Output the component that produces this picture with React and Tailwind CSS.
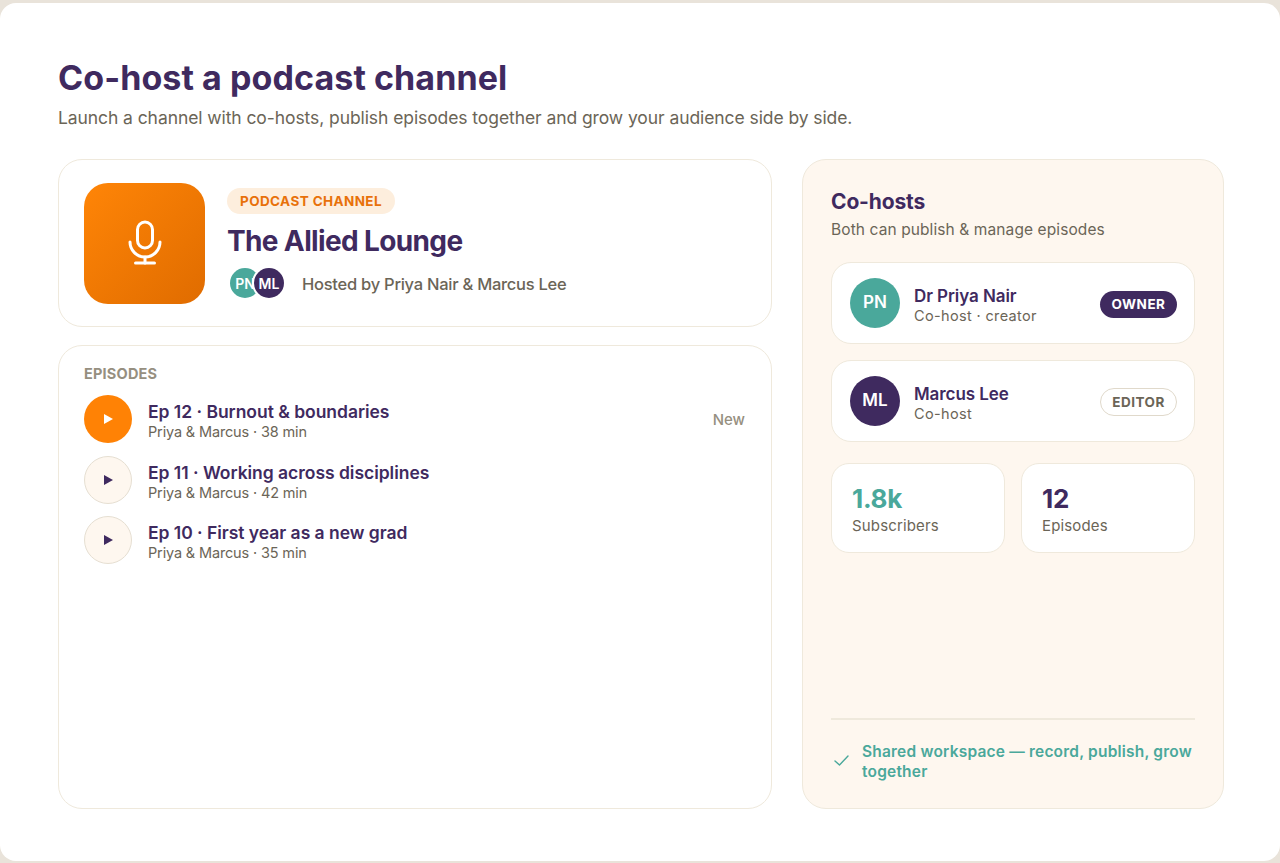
import React from "react";

function Play({ color, size = 12 }) {
  return (
    <svg width={size} height={size} viewBox="0 0 12 12"><path d="M2 1 L11 6 L2 11 Z" fill={color} /></svg>
  );
}

function Episode({ title, meta, active, right }) {
  return (
    <div className="flex items-center h-[48px]">
      <div className={active ? "w-[48px] h-[48px] rounded-full bg-[#ff8205] flex items-center justify-center shrink-0" : "w-[48px] h-[48px] rounded-full bg-[#fef7ef] border border-[#e6dfd2] flex items-center justify-center shrink-0"}>
        <Play color={active ? "#ffffff" : "#3f2a5f"} />
      </div>
      <div className="ml-4 flex-1 pt-[4px]">
        <div className="text-[17.5px] leading-[22px] font-semibold text-[#3f2a5f] tracking-[-0.03px]">{title}</div>
        <div className="text-[14.5px] leading-[18px] text-[#6b6557] tracking-[-0.15px]">{meta}</div>
      </div>
      {right && <div className="text-[15px] font-medium text-[#968f80] pt-[2px] pr-px">{right}</div>}
    </div>
  );
}

function Host({ initials, bg, name, role, badge, dark }) {
  return (
    <div className="h-[82px] bg-white border border-[#efe9dc] rounded-[20px] flex items-center pl-[18px] pr-[17px]">
      <div className={"w-[50px] h-[50px] rounded-full flex items-center justify-center text-white text-[17px] font-semibold shrink-0 " + bg}>{initials}</div>
      <div className="ml-[14px] flex-1 pt-[4px]">
        <div className="text-[17px] leading-[20px] font-semibold text-[#3f2a5f] tracking-[-0.07px]">{name}</div>
        <div className="text-[14.5px] leading-[19px] text-[#6b6557] tracking-[0.35px]">{role}</div>
      </div>
      <div className={dark ? "mt-[2px] h-[27px] w-[77px] rounded-full bg-[#3f2a5f] text-white text-[13.5px] tracking-[0.5px] font-bold flex items-center justify-center" : "mt-[2px] h-[28px] w-[77px] rounded-full bg-white border border-[#e0d9cb] text-[#6b6557] text-[13.5px] tracking-[0.5px] font-bold flex items-center justify-center"}>{badge}</div>
    </div>
  );
}

function Stat({ value, label, color }) {
  return (
    <div className="flex-1 h-[90px] bg-white border border-[#efe9dc] rounded-[18px] pl-[20px] pt-[20px]">
      <div className={"text-[26px] leading-[30px] font-bold tracking-[-0.3px] " + color}>{value}</div>
      <div className="text-[15px] leading-[22px] text-[#6b6557] mt-[1px] tracking-[0.15px]">{label}</div>
    </div>
  );
}

export default function App() {
  return (
    <div className="h-[863px] w-[1280px] bg-[#e9e3da] pt-[3px] pb-[2px] font-['Inter',sans-serif] overflow-hidden">
      <div className="h-full bg-white rounded-[16px] pl-[58px] pr-[56px] pt-[54px] flex flex-col">
        <h1 className="text-[34px] leading-[42px] font-bold text-[#3f2a5f] tracking-[0.08px]">Co-host a podcast channel</h1>
        <p className="text-[17.5px] leading-[24px] text-[#6b6557] mt-[7px] tracking-[-0.08px]">Launch a channel with co-hosts, publish episodes together and grow your audience side by side.</p>
        <div className="flex gap-[30px] mt-[29px] h-[650px]">
          <div className="w-[714px] flex flex-col gap-[18px]">
            <div className="h-[168px] border border-[#efe9dc] rounded-[24px] flex items-center pl-[25px]">
              <div className="w-[121px] h-[121px] rounded-[24px] bg-gradient-to-br from-[#ff8507] to-[#e06c00] flex items-center justify-center shrink-0">
                <svg width="40" height="46" viewBox="0 0 40 46" fill="none" stroke="#fff" strokeWidth="3" strokeLinecap="round" strokeLinejoin="round">
                  <rect x="12.5" y="2" width="15" height="26" rx="7.5" />
                  <path d="M5 22 a15 15 0 0 0 30 0" />
                  <path d="M20 37 v6" />
                  <path d="M10.5 43 h19" />
                </svg>
              </div>
              <div className="ml-[22px]">
                <div className="inline-flex items-center h-[26px] px-[13px] rounded-full bg-[#fdeedd] text-[#e8710a] text-[13.5px] font-bold tracking-[0.4px]">PODCAST CHANNEL</div>
                <div className="text-[28px] leading-[36px] font-bold text-[#3f2a5f] mt-[9px] tracking-[-0.64px]">The Allied Lounge</div>
                <div className="flex items-center mt-[9px]">
                  <div className="flex pl-[3px]">
                    <div className="w-[30px] h-[30px] rounded-full bg-[#4aa89b] text-white text-[14px] font-semibold flex items-center justify-center">PN</div>
                    <div className="w-[30px] h-[30px] rounded-full bg-[#3f2a5f] ring-2 ring-white text-white text-[14px] font-semibold flex items-center justify-center -ml-[6px]">ML</div>
                  </div>
                  <div className="ml-[18px] pt-[2px] text-[16.5px] font-medium text-[#6b6557] tracking-[-0.26px]">Hosted by Priya Nair &amp; Marcus Lee</div>
                </div>
              </div>
            </div>
            <div className="flex-1 border border-[#efe9dc] rounded-[24px] pl-[25px] pr-[25px] pt-[18px]">
              <div className="text-[14.5px] leading-[20px] font-bold text-[#968f80] tracking-[0.2px]">EPISODES</div>
              <div className="flex flex-col gap-[12.5px] mt-[11px]">
                <Episode title="Ep 12 · Burnout & boundaries" meta="Priya & Marcus · 38 min" active right="New" />
                <Episode title="Ep 11 · Working across disciplines" meta="Priya & Marcus · 42 min" />
                <Episode title="Ep 10 · First year as a new grad" meta="Priya & Marcus · 35 min" />
              </div>
            </div>
          </div>
          <div className="w-[422px] bg-[#fef7ef] border border-[#efe9dc] rounded-[24px] px-[28px] pt-[28px] flex flex-col">
            <div className="text-[21px] leading-[28px] font-bold text-[#3f2a5f] tracking-[-0.15px]">Co-hosts</div>
            <div className="text-[15.5px] leading-[22px] text-[#6b6557] mt-[3px] tracking-[0.1px]">Both can publish &amp; manage episodes</div>
            <div className="flex flex-col gap-[16px] mt-[21px]">
              <Host initials="PN" bg="bg-[#4aa89b]" name="Dr Priya Nair" role="Co-host · creator" badge="OWNER" dark />
              <Host initials="ML" bg="bg-[#3f2a5f]" name="Marcus Lee" role="Co-host" badge="EDITOR" />
            </div>
            <div className="flex gap-[16px] mt-[21px]">
              <Stat value="1.8k" label="Subscribers" color="text-[#4aa89b]" />
              <Stat value="12" label="Episodes" color="text-[#3f2a5f]" />
            </div>
            <div className="mt-auto border-t-2 border-[#efe9dc] h-[90px] flex items-start pt-[22px]">
              <svg className="mt-[12px] ml-[3px] shrink-0" width="15" height="13" viewBox="0 0 15 13" fill="none" stroke="#4aa89b" strokeWidth="1.4" strokeLinecap="round" strokeLinejoin="round"><path d="M1 7 L5.5 11 L14 2" /></svg>
              <div className="ml-[13px] text-[15.5px] leading-[20px] font-semibold text-[#4aa89b] tracking-[0.2px]">Shared workspace — record, publish, grow together</div>
            </div>
          </div>
        </div>
      </div>
    </div>
  );
}
